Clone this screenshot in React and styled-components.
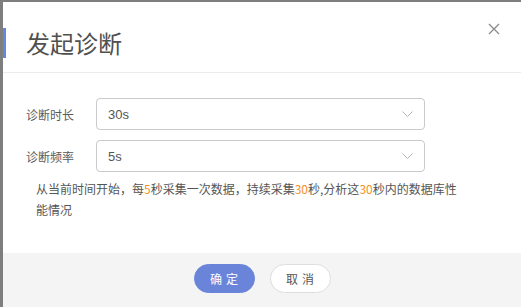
import React from 'react'
import styled, { createGlobalStyle } from 'styled-components'

const GlobalStyle = createGlobalStyle`
  html, body {
    margin: 0;
    padding: 0;
    background: #fff;
  }
  body {
    font-family: "Liberation Sans", "Noto Sans CJK SC", sans-serif;
  }
`

const rows = [
  { label: '诊断时长', value: '30s' },
  { label: '诊断频率', value: '5s' },
]

const App = () => {
  return <>
    <GlobalStyle />
    <Dialog>
      <Header>
        <Accent />
        <Title>发起诊断</Title>
        <Close aria-label='close'>
          <svg width='12' height='12' viewBox='0 0 12 12'>
            <path d='M1 1L11 11M11 1L1 11' stroke='#8a8a8a' strokeWidth='1.3' fill='none' />
          </svg>
        </Close>
      </Header>
      <Body>
        {
          rows.map((row) => {
            return <Row key={row.label}>
              <Label>{row.label}</Label>
              <Select>
                <span>{row.value}</span>
                <svg width='11' height='6' viewBox='0 0 11 6'>
                  <polyline points='0.5,0.5 5.5,5.5 10.5,0.5' stroke='#b4b4b8' strokeWidth='1' fill='none' />
                </svg>
              </Select>
            </Row>
          })
        }
        <Hint>
          从当前时间开始，每<Num>5</Num>秒采集一次数据，持续采集<Num>30</Num>秒,分析这<Num>30</Num>秒内的数据库性<br />能情况
        </Hint>
      </Body>
      <Footer>
        <Button primary>确定</Button>
        <Button>取消</Button>
      </Footer>
    </Dialog>
  </>
}

const Dialog = styled.div`
  box-sizing: border-box;
  height: 307px;
  border-top: 2px solid #7e7e7e;
  border-left: 3px solid #7e7e7e;
  display: flex;
  flex-direction: column;
  font-family: "Liberation Sans", "Noto Sans CJK SC", sans-serif;
`

const Header = styled.div`
  box-sizing: border-box;
  height: 71px;
  padding-top: 12px;
  border-bottom: 1px solid #ececec;
  display: flex;
  align-items: center;
  gap: 20px;
`

const Accent = styled.div`
  flex: 0 0 3px;
  height: 30px;
  background: #6b84db;
`

const Title = styled.div`
  font-size: 24px;
  font-weight: 400;
  color: #505050;
  font-family: "Noto Sans CJK SC", sans-serif;
  line-height: 30px;
`

const Close = styled.button`
  align-self: flex-start;
  margin: 9px 21px 0 auto;
  padding: 0;
  border: 0;
  background: none;
  width: 12px;
  height: 12px;
  display: flex;
  cursor: pointer;
`

const Body = styled.div`
  flex: 1;
  padding: 25px 0 0 23px;
  display: flex;
  flex-direction: column;
`

const Row = styled.div`
  display: flex;
  align-items: center;
  margin-bottom: 10px;
`

const Label = styled.div`
  width: 70px;
  font-size: 12px;
  color: #5a5a5a;
  font-family: "Noto Sans CJK SC", sans-serif;
`

const Select = styled.div`
  box-sizing: border-box;
  width: 329px;
  height: 32px;
  border: 1px solid #c9c9ce;
  border-radius: 4px;
  padding: 0 11px;
  display: flex;
  align-items: center;
  justify-content: space-between;
  font-size: 13px;
  color: #555;
`

const Hint = styled.p`
  margin: -4px 0 0 10px;
  width: 440px;
  font-size: 12px;
  line-height: 21px;
  color: #555;
  font-family: "Noto Sans CJK SC", sans-serif;
`

const Num = styled.span`
  color: #f7901e;
`

const Footer = styled.div`
  box-sizing: border-box;
  height: 54px;
  padding-top: 11px;
  background: #f4f4f4;
  display: flex;
  justify-content: center;
  align-items: flex-start;
  gap: 15px;
`

const Button = styled.button`
  box-sizing: border-box;
  width: 61px;
  height: 29px;
  border-radius: 15px;
  border: 1px solid ${(p) => (p.primary ? '#6a84da' : '#dedede')};
  background: ${(p) => (p.primary ? '#6a84da' : '#fff')};
  color: ${(p) => (p.primary ? '#fff' : '#555')};
  font-size: 12px;
  letter-spacing: 4px;
  text-indent: 4px;
  font-family: "Noto Sans CJK SC", sans-serif;
  padding: 0;
  cursor: pointer;
`

export default App
